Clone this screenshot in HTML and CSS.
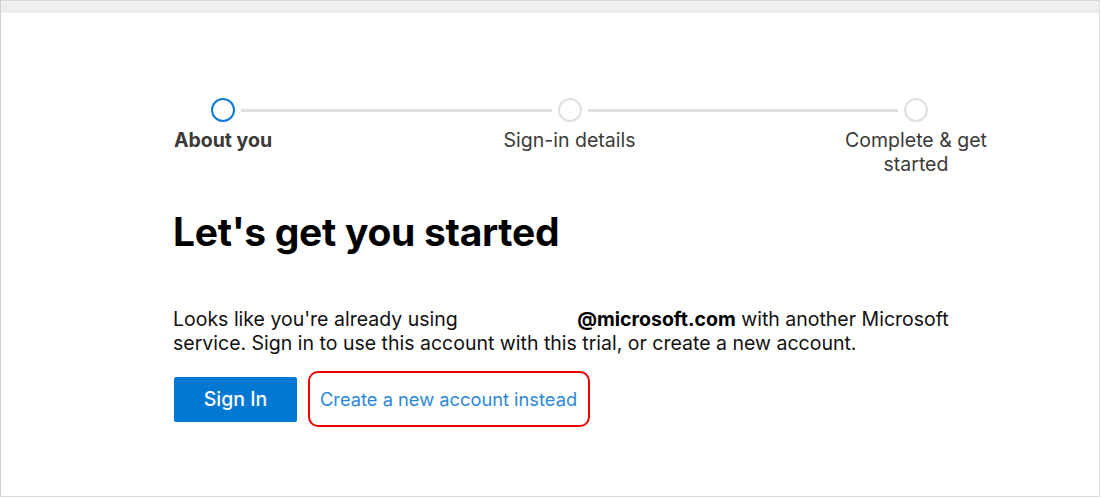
FILE: index.html
```html
<!DOCTYPE html>
<html lang="en">
<head>
<meta charset="utf-8">
<title>Let's get you started</title>
<link rel="stylesheet" href="styles.css">
</head>
<body>
<div class="frame">
  <div class="topbar"></div>
  <main class="content">
    <div class="stepper">
      <div class="step active">
        <span class="dot"></span>
        <span class="label">About you</span>
      </div>
      <span class="connector"></span>
      <div class="step">
        <span class="dot"></span>
        <span class="label">Sign-in details</span>
      </div>
      <span class="connector"></span>
      <div class="step">
        <span class="dot"></span>
        <span class="label">Complete &amp; get started</span>
      </div>
    </div>

    <h1 class="title">Let's get you started</h1>

    <p class="message">Looks like you're already using <span class="redacted"></span><strong>@microsoft.com</strong> with another Microsoft service. Sign in to use this account with this trial, or create a new account.</p>

    <div class="actions">
      <button class="btn-primary" type="button">Sign In</button>
      <div class="highlight">
        <a class="link" href="#">Create a new account instead</a>
      </div>
    </div>
  </main>
</div>
</body>
</html>
```
FILE: styles.css
```css
* { box-sizing: border-box; }

html, body {
  margin: 0;
  padding: 0;
  background: #ffffff;
}

body {
  font-family: Inter, "Open Sans", "Liberation Sans", sans-serif;
  color: #1b1a19;
}

.frame {
  width: 1100px;
  height: 497px;
  border-left: 1px solid #cfcfcf;
  border-right: 1px solid #e2e2e2;
  border-bottom: 1px solid #dadada;
  background: #ffffff;
}

.topbar {
  height: 13px;
  border-top: 1px solid #d9d9d9;
  background: linear-gradient(#f2f2f2, #ebebeb);
  border-bottom: 1px solid #ededed;
}

.content {
  padding: 85px 0 0 147px;
}

.stepper {
  display: flex;
  width: 843px;
}

.step {
  width: 150px;
  flex: 0 0 150px;
  display: flex;
  flex-direction: column;
  align-items: center;
}

.dot {
  width: 24px;
  height: 24px;
  border-radius: 50%;
  border: 2px solid #e1dfdd;
  background: #fff;
}

.step.active .dot {
  border-color: #0f7ad8;
}

.label {
  margin-top: 6px;
  font-size: 19.5px;
  line-height: 24px;
  color: #3b3a39;
  text-align: center;
  width: 150px;
  padding: 0 2px;
}

.step.active .label {
  font-weight: 700;
}

.connector {
  flex: 1 1 0;
  height: 3px;
  margin: 11px -57px 0;
  background: #e1dfdd;
}

.title {
  margin: 32px 0 0 25px;
  font-size: 39px;
  line-height: 48px;
  font-weight: 700;
  color: #000;
  letter-spacing: -0.3px;
}

.message {
  margin: 51px 0 0 25px;
  width: 800px;
  font-size: 19.5px;
  line-height: 24px;
  color: #111;
}

.message strong {
  font-weight: 700;
  color: #000;
}

.redacted {
  display: inline-block;
  width: 114px;
}

.actions {
  margin: 16px 0 0 26px;
  display: flex;
  align-items: center;
  gap: 11px;
}

.btn-primary {
  width: 123px;
  height: 45px;
  border: none;
  border-radius: 2px;
  background: #0078d4;
  color: #fff;
  font-family: inherit;
  font-size: 19.5px;
  font-weight: 500;
  padding: 0;
}

.highlight {
  border: 2px solid #ee0000;
  border-radius: 10px;
  padding: 0 11px 0 10px;
  height: 56px;
  display: flex;
  align-items: center;
}

.link {
  color: #2b88d8;
  text-decoration: none;
  font-size: 18.3px;
  line-height: 23px;
}
```
